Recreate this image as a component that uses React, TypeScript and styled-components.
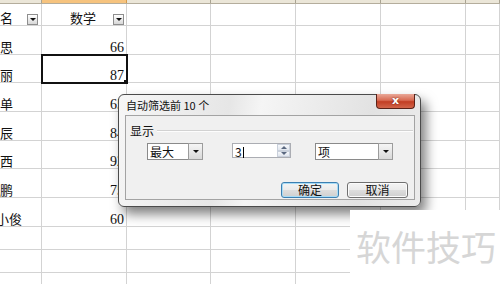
import styled, { createGlobalStyle } from 'styled-components';

const COLS = '42px 85px 84px 85px 85px 85px 1fr';

const GlobalStyle = createGlobalStyle`
  html, body { margin: 0; padding: 0; }
  body {
    width: 500px;
    height: 284px;
    overflow: hidden;
    background: #fff;
    font-family: "Noto Sans CJK SC", sans-serif;
  }
`;

const Page = styled.div`
  position: relative;
  width: 500px;
  height: 284px;
  overflow: hidden;
  background: #fff;
`;

const HeaderStrip = styled.div`
  display: grid;
  grid-template-columns: ${COLS};
  height: 4px;
  border-bottom: 1px solid #b4ad9c;
  box-sizing: border-box;
`;

const HeaderCell = styled.div<{ $active?: boolean }>`
  background: ${(p) => (p.$active ? '#f6c37e' : '#ebe6d8')};
  border-right: 1px solid ${(p) => (p.$active ? '#d49a4a' : '#a9a392')};
`;

const Row = styled.div<{ $h: number }>`
  display: grid;
  grid-template-columns: ${COLS};
  height: ${(p) => p.$h}px;
`;

const Cell = styled.div`
  box-sizing: border-box;
  border-right: 1px solid #d3d3d3;
  border-bottom: 1px solid #d3d3d3;
  display: flex;
  align-items: flex-end;
  overflow: hidden;
  font-size: 13px;
  line-height: 14px;
  color: #111;
`;

const NameCell = styled(Cell)<{ $shift?: number }>`
  justify-content: flex-start;
  span {
    margin-left: ${(p) => p.$shift ?? 0}px;
    white-space: nowrap;
  }
`;

const ScoreCell = styled(Cell)<{ $selected?: boolean }>`
  justify-content: flex-end;
  padding-right: 2px;
  font-family: "Liberation Serif", serif;
  font-size: 14px;
  line-height: 13px;
  position: relative;
  ${(p) =>
    p.$selected &&
    `
    outline: 2px solid #111;
    outline-offset: -1px;
    z-index: 1;
    &::after {
      content: '';
      position: absolute;
      right: -3px;
      bottom: -3px;
      width: 4px;
      height: 4px;
      background: #111;
      border: 1px solid #fff;
    }
  `}
`;

const HeadName = styled(Cell)`
  justify-content: space-between;
  padding-right: 3px;
`;

const HeadScore = styled(Cell)`
  justify-content: space-between;
  padding-left: 28px;
  padding-right: 2px;
`;

const FilterButton = styled.span`
  box-sizing: border-box;
  width: 11px;
  height: 11px;
  margin-bottom: 0;
  border: 1px solid #8e8e8e;
  background: linear-gradient(#ffffff, #d8d8d8);
  display: flex;
  align-items: center;
  justify-content: center;
  &::before {
    content: '';
    border-left: 3px solid transparent;
    border-right: 3px solid transparent;
    border-top: 3px solid #111;
  }
`;

const Dialog = styled.div`
  position: absolute;
  left: 118px;
  top: 94px;
  width: 303px;
  height: 113px;
  box-sizing: border-box;
  border: 1px solid #4b4b4b;
  border-radius: 6px;
  background: linear-gradient(100deg, #f6f6f6 0%, #e6e6e6 35%, #f5f5f5 45%, #e2e2e2 80%, #ececec 100%);
  box-shadow: 5px 7px 12px rgba(0, 0, 0, 0.5);
  padding: 0 5px 6px 6px;
  display: flex;
  flex-direction: column;
`;

const TitleBar = styled.div`
  height: 20px;
  display: flex;
  align-items: flex-start;
`;

const Title = styled.span`
  font-size: 11px;
  line-height: 20px;
  padding-left: 1px;
  color: #111;
`;

const CloseButton = styled.span`
  margin-left: auto;
  margin-top: -1px;
  width: 39px;
  height: 15px;
  box-sizing: border-box;
  border: 1px solid #5a2218;
  border-top: none;
  border-radius: 0 0 4px 4px;
  background: linear-gradient(#e9a898 0%, #d86a52 45%, #c23e24 55%, #d2654a 100%);
  color: #fff;
  font-family: "DejaVu Sans", sans-serif;
  font-weight: bold;
  font-size: 11px;
  line-height: 13px;
  text-align: center;
  text-shadow: 0 0 2px #6b1d10;
`;

const Client = styled.div`
  flex: 1;
  box-sizing: border-box;
  background: #f0f0f0;
  border: 1px solid #a3a3a3;
  padding: 8px 1px 0 4px;
  display: flex;
  flex-direction: column;
  font-size: 12px;
  color: #111;
`;

const GroupHead = styled.div`
  display: flex;
  align-items: center;
  line-height: 14px;
`;

const Rule = styled.div`
  flex: 1;
  margin-left: 3px;
  border-top: 1px solid #d2d2d2;
  border-bottom: 1px solid #fdfdfd;
`;

const ControlRow = styled.div`
  display: flex;
  align-items: flex-start;
  margin-top: 5px;
  padding-left: 17px;
  gap: 29px;
`;

const Combo = styled.div<{ $w: number }>`
  box-sizing: border-box;
  width: ${(p) => p.$w}px;
  height: 17px;
  border: 1px solid #8a8a8a;
  background: #fff;
  display: flex;
`;

const FieldText = styled.span`
  flex: 1;
  padding-left: 2px;
  line-height: 15px;
  font-size: 12px;
`;

const DropButton = styled.span`
  box-sizing: border-box;
  width: 15px;
  border: 1px solid #9c9c9c;
  margin: -1px -1px -1px 0;
  background: linear-gradient(#f5f5f5, #d9d9d9);
  display: flex;
  align-items: center;
  justify-content: center;
  &::before {
    content: '';
    border-left: 3px solid transparent;
    border-right: 3px solid transparent;
    border-top: 3px solid #111;
  }
`;

const Spin = styled.div`
  box-sizing: border-box;
  width: 59px;
  height: 15px;
  margin-right: -5px;
  border: 1px solid #abadb3;
  background: #fff;
  display: flex;
`;

const Caret = styled.span`
  display: inline-block;
  width: 1px;
  height: 11px;
  margin-left: 1px;
  vertical-align: -1px;
  background: #000;
`;

const SpinButtons = styled.span`
  width: 13px;
  display: flex;
  flex-direction: column;
`;

const SpinHalf = styled.span<{ $up?: boolean }>`
  flex: 1;
  border: 1px solid #c9d0db;
  background: linear-gradient(#f6f8fb, #e1e6ee);
  display: flex;
  align-items: center;
  justify-content: center;
  &::before {
    content: '';
    border-left: 3px solid transparent;
    border-right: 3px solid transparent;
    ${(p) => (p.$up ? 'border-bottom: 3px solid #5a6880;' : 'border-top: 3px solid #5a6880;')}
  }
`;

const ButtonRow = styled.div`
  display: flex;
  justify-content: flex-end;
  gap: 8px;
  margin-top: 22px;
  padding-right: 5px;
`;

const PushButton = styled.span<{ $w: number; $default?: boolean }>`
  box-sizing: border-box;
  width: ${(p) => p.$w}px;
  height: 16px;
  border: 1px solid ${(p) => (p.$default ? '#3c7fb1' : '#707070')};
  border-radius: 3px;
  background: linear-gradient(#f4f4f4 0%, #ebebeb 48%, #dddddd 52%, #cfcfcf 100%);
  box-shadow: ${(p) => (p.$default ? 'inset 0 0 0 1px #a8dcf6' : 'inset 0 0 0 1px #fbfbfb')};
  font-size: 12px;
  line-height: 14px;
  text-align: center;
`;

const Watermark = styled.div`
  position: absolute;
  left: 350px;
  top: 210px;
  right: 0;
  bottom: 0;
  background: #fff;
  padding: 18px 0 0 6px;
  font-size: 35px;
  line-height: 35px;
  color: #d6d6d6;
  white-space: nowrap;
`;

const rows = [
  { name: '思', score: '66', h: 29 },
  { name: '丽', score: '87', h: 28, selected: true },
  { name: '单', score: '65', h: 29 },
  { name: '辰', score: '84', h: 29 },
  { name: '西', score: '92', h: 28 },
  { name: '鹏', score: '75', h: 29 },
  { name: '小俊', score: '60', h: 29, shift: -4 },
];

const emptyCells = [0, 1, 2, 3, 4];

export default function App() {
  return (
    <Page>
      <GlobalStyle />
      <HeaderStrip>
        <HeaderCell />
        <HeaderCell $active />
        <HeaderCell />
        <HeaderCell />
        <HeaderCell />
        <HeaderCell />
        <HeaderCell />
      </HeaderStrip>
      <Row $h={22}>
        <HeadName>
          <span>名</span>
          <FilterButton />
        </HeadName>
        <HeadScore>
          <span>数学</span>
          <FilterButton />
        </HeadScore>
        {emptyCells.map((i) => (
          <Cell key={i} />
        ))}
      </Row>
      {rows.map((r) => (
        <Row key={r.name} $h={r.h}>
          <NameCell $shift={r.shift}>
            <span>{r.name}</span>
          </NameCell>
          <ScoreCell $selected={r.selected}>{r.score}</ScoreCell>
          {emptyCells.map((i) => (
            <Cell key={i} />
          ))}
        </Row>
      ))}
      {[0, 1, 2].map((k) => (
        <Row key={k} $h={23}>
          <Cell />
          <Cell />
          {emptyCells.map((i) => (
            <Cell key={i} />
          ))}
        </Row>
      ))}

      <Dialog>
        <TitleBar>
          <Title>自动筛选前 10 个</Title>
          <CloseButton>x</CloseButton>
        </TitleBar>
        <Client>
          <GroupHead>
            <span>显示</span>
            <Rule />
          </GroupHead>
          <ControlRow>
            <Combo $w={56}>
              <FieldText>最大</FieldText>
              <DropButton />
            </Combo>
            <Spin>
              <FieldText>
                3<Caret />
              </FieldText>
              <SpinButtons>
                <SpinHalf $up />
                <SpinHalf />
              </SpinButtons>
            </Spin>
            <Combo $w={78}>
              <FieldText>项</FieldText>
              <DropButton />
            </Combo>
          </ControlRow>
          <ButtonRow>
            <PushButton $w={58} $default>
              确定
            </PushButton>
            <PushButton $w={61}>取消</PushButton>
          </ButtonRow>
        </Client>
      </Dialog>

      <Watermark>软件技巧</Watermark>
    </Page>
  );
}
